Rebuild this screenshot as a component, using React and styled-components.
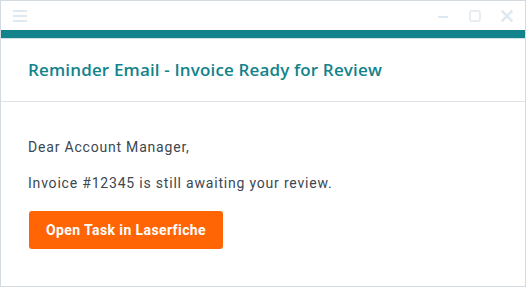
import React from "react";
import styled, { createGlobalStyle } from "styled-components";

const Global = createGlobalStyle`
  html, body { margin: 0; padding: 0; background: #ffffff; }
  * { box-sizing: border-box; }
`;

const Window = styled.div`
  width: 526px;
  height: 287px;
  border: 1px solid #d3dbe1;
  background: #fff;
  display: flex;
  flex-direction: column;
`;

const TitleBar = styled.div`
  height: 29px;
  display: flex;
  align-items: center;
  padding: 0 12px 0 12px;
`;

const Spacer = styled.div`
  flex: 1;
`;

const Controls = styled.div`
  display: flex;
  align-items: center;
  gap: 20px;
`;

const IconBox = styled.svg`
  display: block;
  flex: none;
`;

const Band = styled.div`
  height: 9px;
  background: #12838b;
  border-bottom: 1px solid #cfe3e5;
`;

const Header = styled.div`
  height: 63px;
  border-bottom: 1px solid #dde3e8;
  display: flex;
  align-items: center;
  padding: 0 27px 2px;
`;

const Title = styled.h1`
  margin: 0;
  font-family: "Open Sans", sans-serif;
  font-weight: 600;
  font-size: 17px;
  color: #12838b;
  letter-spacing: 0.15px;
`;

const Body = styled.div`
  padding: 35px 27px 0;
  display: flex;
  flex-direction: column;
  align-items: flex-start;
`;

const Para = styled.p`
  margin: 0 0 ${(p) => p.$gap || 0}px;
  font-family: "Roboto", sans-serif;
  font-size: 14px;
  letter-spacing: 0.8px;
  line-height: 20px;
  color: #3c4750;
`;

const Button = styled.button`
  margin-left: 1px;
  width: 194px;
  height: 38px;
  border: none;
  border-radius: 3px;
  background: #ff6405;
  color: #fff;
  font-family: "Roboto", sans-serif;
  font-weight: 700;
  font-size: 14px;
  letter-spacing: 0.4px;
  cursor: pointer;
`;

const light = "#dfe8ef";

export default function App() {
  return (
    <>
      <Global />
      <Window>
        <TitleBar>
          <IconBox width="14" height="12" viewBox="0 0 14 12">
            <rect x="0" y="0" width="14" height="2" fill={light} />
            <rect x="0" y="5" width="14" height="2" fill={light} />
            <rect x="0" y="10" width="14" height="2" fill={light} />
          </IconBox>
          <Spacer />
          <Controls>
            <IconBox width="11" height="12" viewBox="0 0 11 12">
              <rect x="0" y="6" width="10" height="2" fill={light} />
            </IconBox>
            <IconBox width="12" height="12" viewBox="0 0 12 12">
              <rect x="1" y="1" width="10" height="10" rx="1.5" fill="none" stroke={light} strokeWidth="1.5" />
            </IconBox>
            <IconBox width="12" height="12" viewBox="0 0 12 12">
              <path d="M1.5 1.5 L10.5 10.5 M10.5 1.5 L1.5 10.5" stroke={light} strokeWidth="2.6" strokeLinecap="square" />
            </IconBox>
          </Controls>
        </TitleBar>
        <Band />
        <Header>
          <Title>Reminder Email - Invoice Ready for Review</Title>
        </Header>
        <Body>
          <Para $gap={16}>Dear Account Manager,</Para>
          <Para $gap={18}>Invoice #12345 is still awaiting your review.</Para>
          <Button>Open Task in Laserfiche</Button>
        </Body>
      </Window>
    </>
  );
}
